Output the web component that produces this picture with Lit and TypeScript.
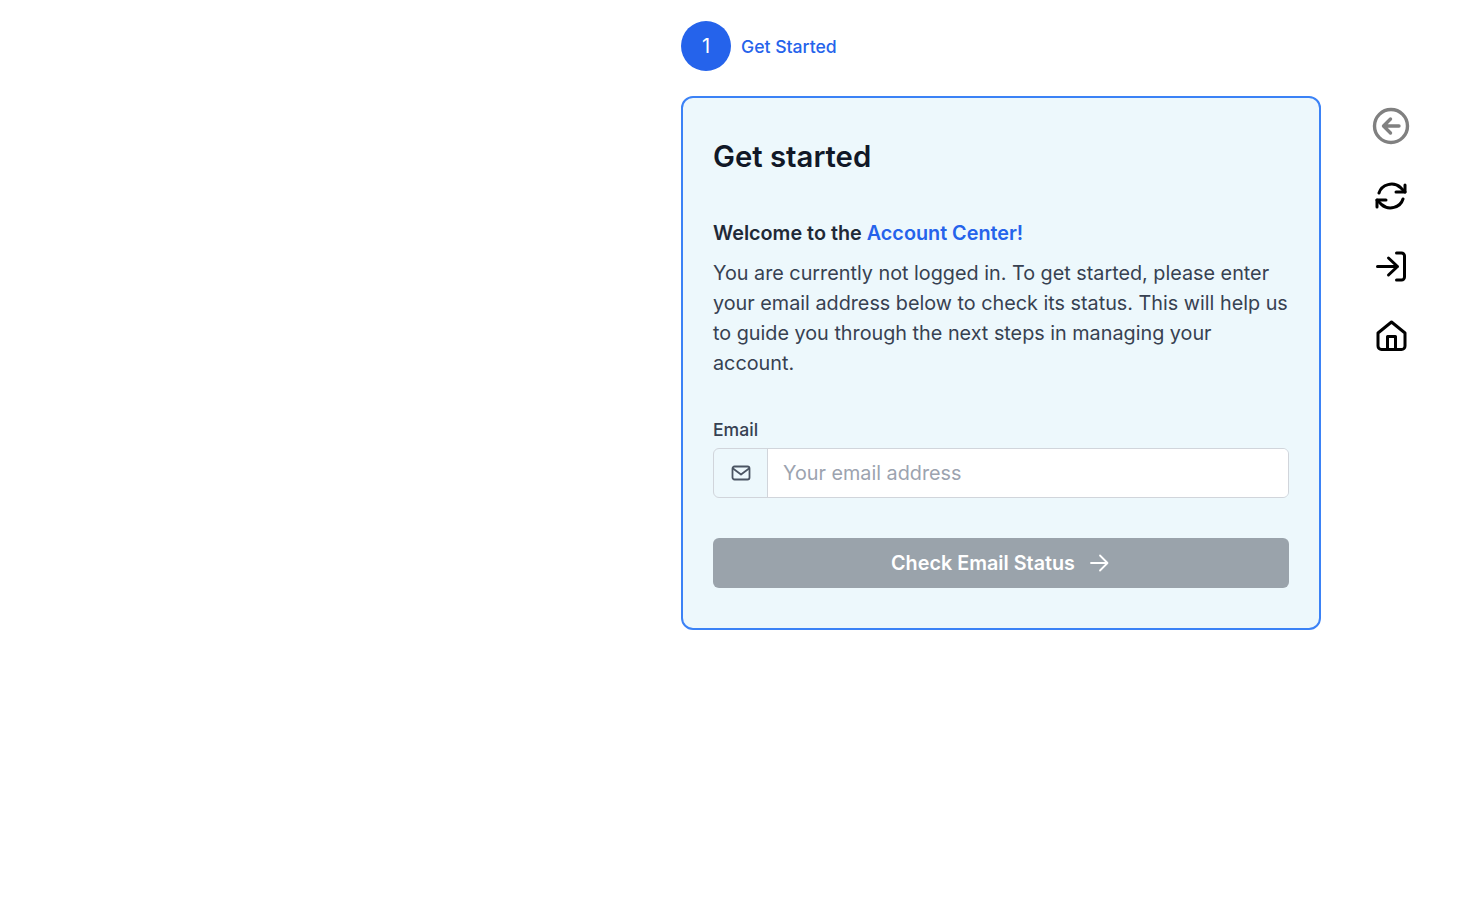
import { LitElement, html, css } from 'lit';
import { customElement } from 'lit/decorators.js';

@customElement('app-root')
export class AppRoot extends LitElement {
  static override styles = css`
    :host {
      display: block;
      min-height: 900px;
      background: #fff;
      font-family: Inter, 'Noto Sans', sans-serif;
      color: #111827;
    }

    .page {
      display: grid;
      grid-template-columns: 640px 1fr;
      padding: 21px 0 0 681px;
    }

    .step {
      display: flex;
      align-items: center;
      gap: 10px;
      height: 50px;
      margin-bottom: 25px;
      color: #2563eb;
      font-weight: 500;
    }

    .step-label {
      font-size: 17.6px;
    }

    .step-num {
      display: flex;
      align-items: center;
      justify-content: center;
      width: 50px;
      height: 50px;
      border-radius: 50%;
      background: #2563eb;
      color: #fff;
      font-size: 20px;
      font-weight: 400;
    }

    .card {
      box-sizing: border-box;
      padding: 30px 30px 40px;
      border: 2px solid #3b82f6;
      border-radius: 12px;
      background: #edf8fc;
    }

    h1 {
      margin: 0 0 32px;
      font-size: 29.3px;
      line-height: 58px;
      font-weight: 600;
    }

    .welcome {
      margin: 0 0 10px;
      font-size: 19.8px;
      line-height: 30px;
      font-weight: 600;
      color: #1f2937;
    }

    .welcome span {
      color: #2563eb;
    }

    .intro {
      margin: 0 0 40px;
      font-size: 19.8px;
      line-height: 30px;
      color: #374151;
    }

    label {
      display: block;
      margin-bottom: 6px;
      font-size: 17.6px;
      line-height: 24px;
      font-weight: 500;
      color: #374151;
    }

    .input-group {
      display: flex;
      height: 50px;
      box-sizing: border-box;
      border: 1px solid #d1d5db;
      border-radius: 6px;
      overflow: hidden;
      margin-bottom: 40px;
    }

    .addon {
      display: flex;
      align-items: center;
      justify-content: center;
      flex: none;
      width: 53px;
      border-right: 1px solid #d1d5db;
      color: #4b5563;
    }

    input {
      flex: 1;
      min-width: 0;
      padding: 0 15px;
      border: 0;
      outline: 0;
      background: #fff;
      font: inherit;
      font-size: 19.8px;
      color: #111827;
    }

    input::placeholder {
      color: #9ca3af;
      opacity: 1;
    }

    button.submit {
      display: flex;
      align-items: center;
      justify-content: center;
      gap: 12px;
      width: 100%;
      height: 50px;
      border: 0;
      border-radius: 6px;
      background: #9aa3ab;
      color: #fff;
      font: inherit;
      font-size: 19.8px;
      font-weight: 600;
    }

    .tools {
      display: flex;
      flex-direction: column;
      align-items: center;
      width: 140px;
      margin-top: 87px;
    }

    .tool {
      display: flex;
      align-items: center;
      justify-content: center;
      width: 36px;
      height: 36px;
      margin-bottom: 34px;
      padding: 0;
      border: 0;
      background: none;
      color: #000;
    }

    .tool.back {
      color: #808080;
    }

    svg {
      display: block;
      flex: none;
      fill: none;
      stroke: currentColor;
      stroke-linecap: round;
      stroke-linejoin: round;
    }
  `;

  override render() {
    return html`
      <div class="page">
        <main>
          <div class="step">
            <div class="step-num">1</div>
            <div class="step-label">Get Started</div>
          </div>
          <section class="card">
            <h1>Get started</h1>
            <p class="welcome">Welcome to the <span>Account Center!</span></p>
            <p class="intro">
              You are currently not logged in. To get started, please enter your email address below
              to check its status. This will help us to guide you through the next steps in managing
              your account.
            </p>
            <label for="email">Email</label>
            <div class="input-group">
              <div class="addon">
                <svg width="20" height="20" viewBox="0 0 20 20" stroke-width="1.8">
                  <rect x="1.500" y="3.500" width="17" height="13" rx="2"></rect>
                  <path d="M2 5.500l8 6 8-6"></path>
                </svg>
              </div>
              <input id="email" type="email" placeholder="Your email address" />
            </div>
            <button class="submit" disabled>
              Check Email Status
              <svg width="24" height="24" viewBox="0 0 24 24" stroke-width="1.800">
                <path d="M4 12h16M13 4.500l7.500 7.500-7.500 7.500"></path>
              </svg>
            </button>
          </section>
        </main>
        <aside class="tools">
          <button class="tool back" aria-label="Back">
            <svg width="38" height="38" viewBox="0 0 38 38" stroke-width="3.400">
              <circle cx="19" cy="19" r="16.500"></circle>
              <path d="M27 19H12M18.500 12l-7 7 7 7"></path>
            </svg>
          </button>
          <button class="tool" aria-label="Refresh">
            <svg width="32" height="32" viewBox="0 0 32 32" stroke-width="3">
              <path d="M4 13A13 12 0 0 1 25.500 7.500L30 12"></path>
              <path d="M30 5V12H21"></path>
              <path d="M28 19A13 12 0 0 1 6.500 24.500L2 20"></path>
              <path d="M2 27V20H11"></path>
            </svg>
          </button>
          <button class="tool" aria-label="Log in">
            <svg width="32" height="32" viewBox="0 0 32 32" stroke-width="3">
              <path d="M2.500 16.500h20M13.500 8l9 8.500-9 8.500"></path>
              <path d="M21.500 3h5a3 3 0 0 1 3 3v21a3 3 0 0 1-3 3h-5"></path>
            </svg>
          </button>
          <button class="tool" aria-label="Home">
            <svg width="32" height="32" viewBox="0 0 32 32" stroke-width="3">
              <path d="M3 13L16.500 2 30 13V26a3.500 3.500 0 0 1-3.500 3.500h-20A3.500 3.500 0 0 1 3 26z"></path>
              <path d="M12.500 29.500V16.500h8V29.500"></path>
            </svg>
          </button>
        </aside>
      </div>
    `;
  }
}
